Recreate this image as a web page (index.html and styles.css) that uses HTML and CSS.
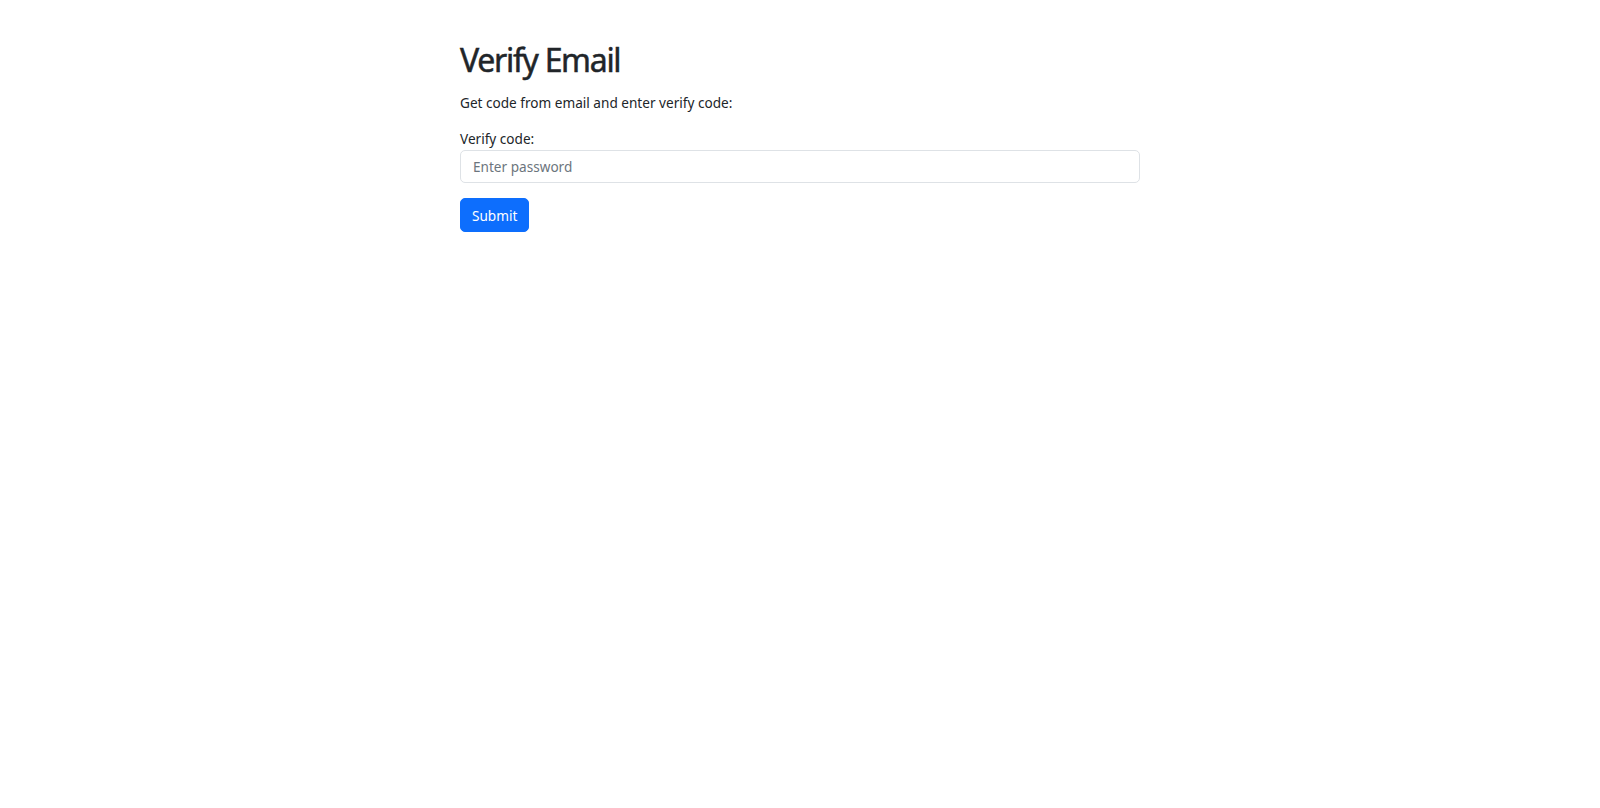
FILE: index.html
```html
<!DOCTYPE html>
<html lang="en">
<head>
<meta charset="utf-8">
<title>Verify Email</title>
<link rel="stylesheet" href="styles.css">
</head>
<body>
<main class="container">
  <h1 class="title">Verify Email</h1>
  <p class="lead-text">Get code from email and enter verify code:</p>
  <form class="verify-form">
    <label class="form-label" for="code">Verify code:</label>
    <input class="form-control" id="code" type="text" placeholder="Enter password">
    <button class="btn-primary" type="submit">Submit</button>
  </form>
</main>
</body>
</html>
```

FILE: styles.css
```css
* { box-sizing: border-box; }
html, body { margin: 0; padding: 0; background: #fff; }
body {
  font-family: "Noto Sans", "Open Sans", sans-serif;
  font-size: 13.6px;
  line-height: 21px;
  color: #212529;
}
.container {
  width: 680px;
  margin: 0 auto;
  padding-top: 40px;
}
.title {
  font-size: 32px;
  line-height: 40px;
  font-weight: 400;
  letter-spacing: -1.3px;
  margin: 0 0 12px;
  -webkit-text-stroke: 0.5px #212529;
}
.lead-text {
  margin: 0 0 15px;
}
.verify-form {
  display: flex;
  flex-direction: column;
  align-items: flex-start;
}
.form-label {
  display: block;
  margin-bottom: 1px;
}
.form-control {
  width: 100%;
  height: 33px;
  padding: 5px 12px;
  font: inherit;
  color: #212529;
  border: 1px solid #dee2e6;
  border-radius: 5px;
  background: #fff;
  outline: none;
}
.form-control::placeholder { color: #6c757d; }
.btn-primary {
  margin-top: 15px;
  height: 34px;
  padding: 0 11px;
  font: inherit;
  color: #fff;
  background: #0d6efd;
  border: 1px solid #0d6efd;
  border-radius: 5px;
  cursor: pointer;
}
```
